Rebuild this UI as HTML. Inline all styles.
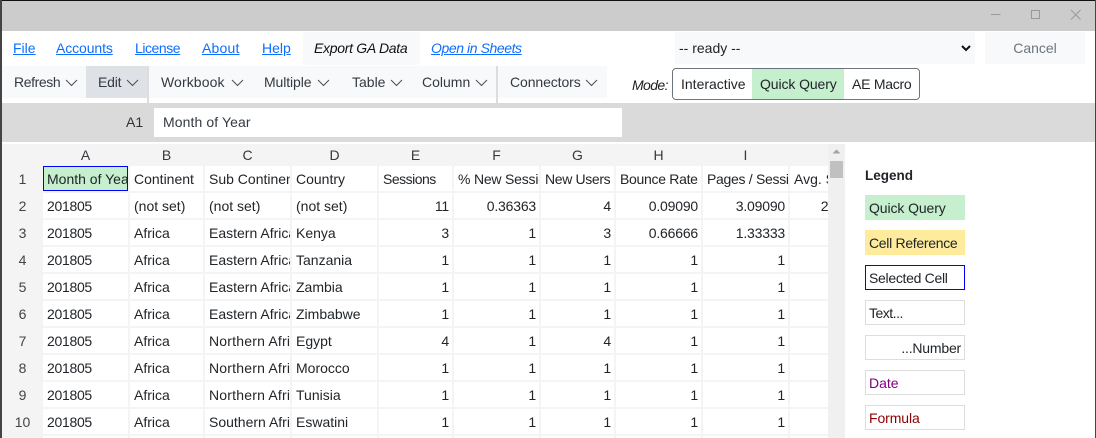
<!DOCTYPE html>
<html><head><meta charset="utf-8"><style>
html,body{margin:0;padding:0;width:1096px;height:438px;overflow:hidden;background:#fff}
body{position:relative;font:14px/20px "Liberation Sans",sans-serif;color:#212529}
.a{position:absolute;white-space:nowrap}
.l{color:#0d6efd;text-decoration:underline;top:38px}
.t{top:72px;color:#343a40}
svg{position:absolute;overflow:visible}
#g{position:absolute;left:2px;top:144px;width:826px;height:294px;background:#f4f4f4;overflow:hidden}
.h{position:absolute;top:1px;text-align:center;color:#343a40}
.r{position:absolute;left:0;width:41px;text-align:center;color:#444}
.c{position:absolute;height:25px;background:#fff;overflow:hidden;line-height:27px;padding:0 3px 0 4px;box-sizing:border-box;white-space:nowrap}
.n{text-align:right;letter-spacing:-.2px}
.d{letter-spacing:-.3px}
.u{letter-spacing:.2px}
.lg{position:absolute;left:865px;width:100px;height:25px;box-sizing:border-box;line-height:26px;padding-left:4px;white-space:nowrap}
.b{border:1px solid #ddd;line-height:24px;padding-left:3px}
</style></head><body>
<div class="a" style="left:0;top:0;width:1096px;height:31px;background:#ccc"></div>
<div class="a" style="left:0;top:0;width:1096px;height:1px;background:#111"></div>
<svg style="left:0;top:0" width="1096" height="31" fill="none" stroke="#999" stroke-width="1"><path d="M991 14.5h9.5"/><rect x="1031.5" y="10.5" width="8" height="8"/><path d="M1071 10l9.5 9.5M1080.500 10l-9.500 9.500"/></svg>

<div class="a" style="left:303px;top:32px;width:117px;height:33px;background:#f8f9fa;border-radius:3px"></div>
<span class="a l" style="left:13px">File</span>
<span class="a l" style="left:56px;letter-spacing:-.1px">Accounts</span>
<span class="a l" style="left:135px;letter-spacing:-.45px">License</span>
<span class="a l" style="left:202px;letter-spacing:.2px">About</span>
<span class="a l" style="left:262px">Help</span>
<span class="a" style="left:314px;top:38px;font-style:italic;color:#111;letter-spacing:-.3px">Export GA Data</span>
<span class="a l" style="left:431px;font-style:italic;letter-spacing:-.42px">Open in Sheets</span>

<div class="a" style="left:675px;top:32px;width:300px;height:32px;background:#f8f9fa"></div>
<span class="a" style="left:679px;top:38px">-- ready --</span>
<svg style="left:961px;top:45px" width="10" height="7" fill="none" stroke="#111" stroke-width="2"><path d="M1 1l4 4 4-4"/></svg>
<div class="a" style="left:985px;top:32px;width:100px;height:32px;background:#f8f9fa;text-align:center;line-height:32px;color:#6c757d">Cancel</div>

<div class="a" style="left:2px;top:66px;width:605px;height:32px;background:#f8f9fa"></div>
<div class="a" style="left:86px;top:66px;width:61px;height:32px;background:#dee2e6"></div>
<div class="a" style="left:147px;top:66px;width:2px;height:37px;background:#ddd"></div>
<div class="a" style="left:496px;top:66px;width:2px;height:37px;background:#ddd"></div>
<span class="a t" style="left:14px;letter-spacing:-.4px">Refresh</span>
<span class="a t" style="left:98px;letter-spacing:-.2px">Edit</span>
<span class="a t" style="left:161px;letter-spacing:.1px">Workbook</span>
<span class="a t" style="left:264px;letter-spacing:-.1px">Multiple</span>
<span class="a t" style="left:352px">Table</span>
<span class="a t" style="left:422px">Column</span>
<span class="a t" style="left:510px;letter-spacing:-.1px">Connectors</span>
<svg style="left:0;top:0" width="1096" height="100" fill="none" stroke="#495057" stroke-width="1"><path d="M66 80l5.500 5.500 5.500-5.500M127 80l5.500 5.500 5.500-5.500M232 80l5.500 5.500 5.500-5.500M318 80l5.500 5.500 5.500-5.500M391 80l5.500 5.500 5.500-5.500M476 80l5.500 5.500 5.500-5.500M586 80l5.500 5.500 5.500-5.500"/></svg>

<span class="a" style="left:632px;top:75px;font-style:italic;color:#222;letter-spacing:-.6px">Mode:</span>
<div class="a" style="left:672px;top:68px;width:248px;height:32px;box-sizing:border-box;border:1px solid #6c757d;border-radius:4px;overflow:hidden">
<div class="a" style="left:79px;top:0;width:92px;height:30px;background:#c6efce"></div>
<span class="a" style="left:8px;top:5px">Interactive</span>
<span class="a" style="left:87px;top:5px;letter-spacing:-.1px">Quick Query</span>
<span class="a" style="left:179px;top:5px;letter-spacing:-.25px">AE Macro</span>
</div>

<div class="a" style="left:0;top:103px;width:1096px;height:39px;background:#dadada"></div>
<span class="a" style="left:126px;top:112px;color:#333">A1</span>
<div class="a" style="left:154px;top:108px;width:468px;height:29px;background:#fff;line-height:29px;text-indent:9px;color:#343a40;letter-spacing:.1px">Month of Year</div>

<div id="g">
<span class="h" style="left:41px;width:85px">A</span><span class="h" style="left:128px;width:73px">B</span><span class="h" style="left:203px;width:85px">C</span><span class="h" style="left:290px;width:85px">D</span><span class="h" style="left:377px;width:73px">E</span><span class="h" style="left:452px;width:85px">F</span><span class="h" style="left:539px;width:73px">G</span><span class="h" style="left:614px;width:85px">H</span><span class="h" style="left:701px;width:85px">I</span>
<span class="r" style="top:25px">1</span><span class="r" style="top:52px">2</span><span class="r" style="top:79px">3</span><span class="r" style="top:106px">4</span><span class="r" style="top:133px">5</span><span class="r" style="top:160px">6</span><span class="r" style="top:187px">7</span><span class="r" style="top:214px">8</span><span class="r" style="top:241px">9</span><span class="r" style="top:268px">10</span>

<div class="c" style="left:41px;top:22px;width:85px;background:#c6efce;border:1px solid #00f;padding-left:3px;line-height:25px">Month of Year</div>
<div class="c" style="left:128px;top:22px;width:73px">Continent</div>
<div class="c" style="left:203px;top:22px;width:85px">Sub Continent</div>
<div class="c" style="left:290px;top:22px;width:85px">Country</div>
<div class="c" style="left:377px;top:22px;width:73px;letter-spacing:-.5px">Sessions</div>
<div class="c" style="left:452px;top:22px;width:85px;letter-spacing:-.2px">% New Sessions</div>
<div class="c" style="left:539px;top:22px;width:73px;letter-spacing:-.35px">New Users</div>
<div class="c" style="left:614px;top:22px;width:85px;letter-spacing:-.3px">Bounce Rate</div>
<div class="c" style="left:701px;top:22px;width:85px;letter-spacing:-.3px">Pages / Session</div>
<div class="c" style="left:788px;top:22px;width:85px">Avg. Session</div>

<div class="c d" style="left:41px;top:49px;width:85px">201805</div><div class="c" style="left:128px;top:49px;width:73px">(not set)</div><div class="c" style="left:203px;top:49px;width:85px">(not set)</div><div class="c" style="left:290px;top:49px;width:85px">(not set)</div><div class="c n" style="left:377px;top:49px;width:73px">11</div><div class="c n" style="left:452px;top:49px;width:85px">0.36363</div><div class="c n" style="left:539px;top:49px;width:73px">4</div><div class="c n" style="left:614px;top:49px;width:85px">0.09090</div><div class="c n" style="left:701px;top:49px;width:85px">3.09090</div><div class="c n" style="left:788px;top:49px;width:85px;padding-right:5px">2.72727</div>

<div class="c d" style="left:41px;top:76px;width:85px">201805</div><div class="c" style="left:128px;top:76px;width:73px">Africa</div><div class="c" style="left:203px;top:76px;width:85px">Eastern Africa</div><div class="c" style="left:290px;top:76px;width:85px">Kenya</div><div class="c n" style="left:377px;top:76px;width:73px">3</div><div class="c n" style="left:452px;top:76px;width:85px">1</div><div class="c n" style="left:539px;top:76px;width:73px">3</div><div class="c n" style="left:614px;top:76px;width:85px">0.66666</div><div class="c n" style="left:701px;top:76px;width:85px">1.33333</div><div class="c n" style="left:788px;top:76px;width:85px">1</div>

<div class="c d" style="left:41px;top:103px;width:85px">201805</div><div class="c" style="left:128px;top:103px;width:73px">Africa</div><div class="c" style="left:203px;top:103px;width:85px">Eastern Africa</div><div class="c" style="left:290px;top:103px;width:85px">Tanzania</div><div class="c n" style="left:377px;top:103px;width:73px">1</div><div class="c n" style="left:452px;top:103px;width:85px">1</div><div class="c n" style="left:539px;top:103px;width:73px">1</div><div class="c n" style="left:614px;top:103px;width:85px">1</div><div class="c n" style="left:701px;top:103px;width:85px">1</div><div class="c n" style="left:788px;top:103px;width:85px">1</div>

<div class="c d" style="left:41px;top:130px;width:85px">201805</div><div class="c" style="left:128px;top:130px;width:73px">Africa</div><div class="c" style="left:203px;top:130px;width:85px">Eastern Africa</div><div class="c" style="left:290px;top:130px;width:85px">Zambia</div><div class="c n" style="left:377px;top:130px;width:73px">1</div><div class="c n" style="left:452px;top:130px;width:85px">1</div><div class="c n" style="left:539px;top:130px;width:73px">1</div><div class="c n" style="left:614px;top:130px;width:85px">1</div><div class="c n" style="left:701px;top:130px;width:85px">1</div><div class="c n" style="left:788px;top:130px;width:85px">1</div>

<div class="c d" style="left:41px;top:157px;width:85px">201805</div><div class="c" style="left:128px;top:157px;width:73px">Africa</div><div class="c" style="left:203px;top:157px;width:85px">Eastern Africa</div><div class="c" style="left:290px;top:157px;width:85px">Zimbabwe</div><div class="c n" style="left:377px;top:157px;width:73px">1</div><div class="c n" style="left:452px;top:157px;width:85px">1</div><div class="c n" style="left:539px;top:157px;width:73px">1</div><div class="c n" style="left:614px;top:157px;width:85px">1</div><div class="c n" style="left:701px;top:157px;width:85px">1</div><div class="c n" style="left:788px;top:157px;width:85px">1</div>

<div class="c d" style="left:41px;top:184px;width:85px">201805</div><div class="c" style="left:128px;top:184px;width:73px">Africa</div><div class="c u" style="left:203px;top:184px;width:85px">Northern Africa</div><div class="c" style="left:290px;top:184px;width:85px">Egypt</div><div class="c n" style="left:377px;top:184px;width:73px">4</div><div class="c n" style="left:452px;top:184px;width:85px">1</div><div class="c n" style="left:539px;top:184px;width:73px">4</div><div class="c n" style="left:614px;top:184px;width:85px">1</div><div class="c n" style="left:701px;top:184px;width:85px">1</div><div class="c n" style="left:788px;top:184px;width:85px">1</div>

<div class="c d" style="left:41px;top:211px;width:85px">201805</div><div class="c" style="left:128px;top:211px;width:73px">Africa</div><div class="c u" style="left:203px;top:211px;width:85px">Northern Africa</div><div class="c" style="left:290px;top:211px;width:85px">Morocco</div><div class="c n" style="left:377px;top:211px;width:73px">1</div><div class="c n" style="left:452px;top:211px;width:85px">1</div><div class="c n" style="left:539px;top:211px;width:73px">1</div><div class="c n" style="left:614px;top:211px;width:85px">1</div><div class="c n" style="left:701px;top:211px;width:85px">1</div><div class="c n" style="left:788px;top:211px;width:85px">1</div>

<div class="c d" style="left:41px;top:238px;width:85px">201805</div><div class="c" style="left:128px;top:238px;width:73px">Africa</div><div class="c u" style="left:203px;top:238px;width:85px">Northern Africa</div><div class="c" style="left:290px;top:238px;width:85px">Tunisia</div><div class="c n" style="left:377px;top:238px;width:73px">1</div><div class="c n" style="left:452px;top:238px;width:85px">1</div><div class="c n" style="left:539px;top:238px;width:73px">1</div><div class="c n" style="left:614px;top:238px;width:85px">1</div><div class="c n" style="left:701px;top:238px;width:85px">1</div><div class="c n" style="left:788px;top:238px;width:85px">1</div>

<div class="c d" style="left:41px;top:265px;width:85px">201805</div><div class="c" style="left:128px;top:265px;width:73px">Africa</div><div class="c" style="left:203px;top:265px;width:85px">Southern Africa</div><div class="c" style="left:290px;top:265px;width:85px">Eswatini</div><div class="c n" style="left:377px;top:265px;width:73px">1</div><div class="c n" style="left:452px;top:265px;width:85px">1</div><div class="c n" style="left:539px;top:265px;width:73px">1</div><div class="c n" style="left:614px;top:265px;width:85px">1</div><div class="c n" style="left:701px;top:265px;width:85px">1</div><div class="c n" style="left:788px;top:265px;width:85px">1</div>

<div class="c" style="left:41px;top:292px;width:85px;height:2px"></div><div class="c" style="left:128px;top:292px;width:73px;height:2px"></div><div class="c" style="left:203px;top:292px;width:85px;height:2px"></div><div class="c" style="left:290px;top:292px;width:85px;height:2px"></div><div class="c" style="left:377px;top:292px;width:73px;height:2px"></div><div class="c" style="left:452px;top:292px;width:85px;height:2px"></div><div class="c" style="left:539px;top:292px;width:73px;height:2px"></div><div class="c" style="left:614px;top:292px;width:85px;height:2px"></div><div class="c" style="left:701px;top:292px;width:85px;height:2px"></div><div class="c" style="left:788px;top:292px;width:38px;height:2px"></div>
</div>

<div class="a" style="left:828px;top:144px;width:17px;height:294px;background:#f0f0f0"></div>
<div class="a" style="left:830px;top:161px;width:13px;height:17px;background:#c0c0c0"></div>
<svg style="left:828px;top:144px" width="17" height="17" fill="#a3a3a3"><path d="M4.500 9.500L8.500 5.500l4 4z"/></svg>

<div class="a" style="left:865px;top:166px;font-weight:bold;font-size:13.500px;color:#212529">Legend</div>
<div class="lg" style="top:195px;background:#c6efce;letter-spacing:-.1px">Quick Query</div>
<div class="lg" style="top:230px;background:#ffeb9c;letter-spacing:-.3px">Cell Reference</div>
<div class="lg b" style="top:265px;border-color:#00f;letter-spacing:-.3px">Selected Cell</div>
<div class="lg b" style="top:300px;letter-spacing:-.5px">Text...</div>
<div class="lg b" style="top:335px;text-align:right;padding-right:3px;letter-spacing:-.2px">...Number</div>
<div class="lg b" style="top:370px;color:#800080">Date</div>
<div class="lg b" style="top:405px;color:#8b0000;letter-spacing:-.1px">Formula</div>

<div class="a" style="left:0;top:0;width:2px;height:438px;background:#444"></div>
<div class="a" style="left:1095px;top:0;width:1px;height:438px;background:#444"></div>
</body></html>
